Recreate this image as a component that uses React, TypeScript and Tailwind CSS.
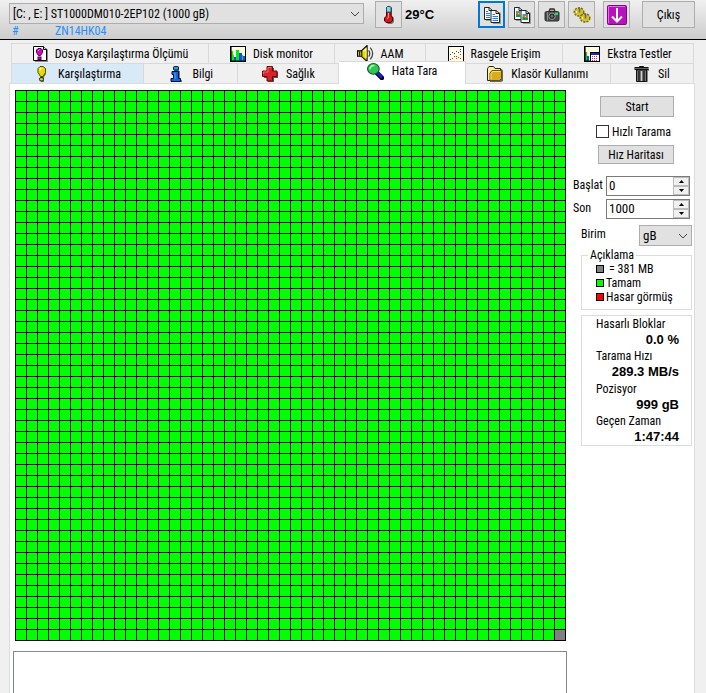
import React, { useState } from "react";

type IconProps = { className?: string };

function Svg({ children, className = "size-4" }: IconProps & { children: React.ReactNode }) {
  return (
    <svg viewBox="0 0 16 16" className={`${className} shrink-0`} aria-hidden="true">
      {children}
    </svg>
  );
}

const FileBenchIcon = () => (
  <Svg>
    <path d="M3 2H14L16 4V16H3Z" fill="#888" />
    <path d="M1.500 .5H11.500L14.500 3.500V14.500H1.500Z" fill="#fff" stroke="#000" />
    <path d="M11.500 .5V3.500H14.500" fill="#ddd" stroke="#000" />
    <path d="M6 2.500H9L10.500 4V6.500L8.500 9.500H6.500L4.500 6.500V4Z" fill="#d0c" stroke="#404" />
    <path d="M6 5L7.500 3.500" stroke="#fbf" />
    <rect x="6" y="11" width="3" height="2.500" fill="#d0c" stroke="#404" />
  </Svg>
);
const MonitorIcon = () => (
  <Svg>
    <rect x=".5" y=".5" width="15" height="15" fill="#ffffe0" stroke="#000" />
    <path d="M1 15V9H4V15ZM6 15V4H9V15ZM12 15V9H13V15Z" fill="#0e0" />
    <path d="M4 15V11H6V15ZM9 15V7H12V15ZM13 15V10H15V15Z" fill="#24f" />
    <path d="M1 5H3V9H1Z" fill="#0e0" />
    <path d="M.8 0V15.200H16" fill="none" stroke="#000" strokeWidth="1.600" />
  </Svg>
);
const SpeakerIcon = () => (
  <Svg className="size-[17px]">
    <path d="M.5 5.500H4L9.500 .5V15.500L4 10.500H.5Z" fill="#e8d800" stroke="#000" />
    <path d="M4.500 5.500V10.500M2.500 6V10" stroke="#000" />
    <path d="M6 6L8.500 3.500V12" fill="none" stroke="#fffba0" />
    <path d="M11 5Q13 8 11 11M12.500 2.500Q17 8 12.500 13.500" fill="none" stroke="#444" strokeWidth="1.200" />
  </Svg>
);
const ScatterIcon = () => (
  <Svg>
    <rect x=".5" y=".5" width="15" height="15" fill="#ffffe0" stroke="#000" />
    <path d="M2 8h1v1h-1zM4 6h1v1h-1zM6 7h1v1h-1zM8 5h1v1h-1zM10 6h1v1h-1zM12 3h1v1h-1zM12 5h1v1h-1z" fill="#23e" />
    <path d="M2 13h1v1h-1zM4 12h1v1h-1zM6 10h1v1h-1zM8 12h1v1h-1zM8 10h1v1h-1zM10 11h1v1h-1zM12 8h1v1h-1zM12 12h1v1h-1z" fill="#e22" />
  </Svg>
);
const ExtraIcon = () => (
  <Svg>
    <rect x=".5" y=".5" width="15" height="15" fill="#ffffe0" stroke="#000" />
    <path d="M1 15V6H3V15Z" fill="#0d0" />
    <path d="M3 15V10H5V15Z" fill="#24f" />
    <rect x="6.500" y="6.500" width="9" height="9" fill="#fff" stroke="#000" />
    <rect x="7" y="7" width="8" height="2" fill="#22c" />
    <path d="M8 10h1v1h-1zM10 10h1v1h-1zM12 10h1v1h-1zM8 12h1v1h-1zM10 12h1v1h-1zM12 12h1v1h-1zM8 14h1v1h-1zM10 14h1v1h-1zM12 14h1v1h-1z" fill="#d24" />
    <path d="M.8 0V15.200H7" fill="none" stroke="#000" strokeWidth="1.600" />
  </Svg>
);
const BulbIcon = () => (
  <Svg>
    <path d="M8 2H12V8L10 11V16H7Z" fill="#777" />
    <path d="M6 .5H9L11.500 2.500V6.500L9 10.500H6.500L4 6.500V2.500Z" fill="#e6da00" stroke="#554c00" />
    <path d="M6 5V2.500H8" fill="none" stroke="#fffbb0" />
    <rect x="5.500" y="11.500" width="4" height="3.500" rx="1.500" fill="#d8cc00" stroke="#222" />
  </Svg>
);
const InfoIcon = () => (
  <Svg>
    <path d="M6 1H11V5H12V14H14V16H5V14H6Z" fill="#777" />
    <rect x="5.500" y=".5" width="5" height="3.500" rx="1" fill="#1ad" stroke="#013" />
    <path d="M4 5.500H10.500V12.500H12.500V15.500H3V12.500H5.500V8.500H4Z" fill="#1563e0" stroke="#013" />
    <path d="M7 6.500V13" stroke="#3ab0ff" />
  </Svg>
);
const HealthIcon = () => (
  <Svg>
    <path d="M6 2H12V6H16V12H12V16H6V12H2V6H6Z" fill="#555" />
    <path d="M5 .5H10.500V5H15V10.500H10.500V15H5V10.500H.5V5H5Z" fill="#d62427" stroke="#6b0b0d" />
    <path d="M6 6V1.500H9.500M1.500 8V6H6" fill="none" stroke="#f66" />
  </Svg>
);
const SearchIcon = () => (
  <Svg className="size-[17px]">
    <path d="M9.500 9.500L14 14" stroke="#002" strokeWidth="4.500" strokeLinecap="round" />
    <path d="M9.500 9L13.500 13" stroke="#12d" strokeWidth="2.500" strokeLinecap="round" />
    <ellipse cx="6" cy="5.500" rx="5.500" ry="5" fill="#2fc84e" stroke="#0b5a22" />
    <path d="M2.800 6A3.500 3 0 0 1 7 2.500" fill="none" stroke="#b4ffc6" strokeWidth="1.300" />
  </Svg>
);
const FolderIcon = () => (
  <Svg>
    <path d="M3 3H15L16 5V15L14 16H3Z" fill="#666" />
    <path d="M.5 14.500V2.500L2 .5H6.500L8 2.500H13.500V13L12 14.500Z" fill="#fff09a" stroke="#222" />
    <path d="M3 14.500V7L5 4.500H14.500V12.500L12.500 14.500Z" fill="#d6ac20" stroke="#6b5200" />
    <path d="M4 13.500V7.500L5.500 5.500H13.500" fill="none" stroke="#ffe66a" />
  </Svg>
);
const TrashIcon = () => (
  <Svg>
    <path d="M4 3H15V5H14V16H5Z" fill="#888" />
    <path d="M5.500 1.500V.5H9.500V1.500" fill="none" stroke="#111" />
    <rect x="1" y="1.500" width="13" height="2" fill="#666" stroke="#111" />
    <path d="M2.500 4H12.500V15.500H2.500Z" fill="#777" stroke="#111" />
    <path d="M5 5V15M10 5V15" stroke="#222" strokeWidth="1.500" />
    <path d="M7.500 5V15" stroke="#ccc" />
  </Svg>
);

function ThermometerIcon() {
  return (
    <svg viewBox="0 0 12 18" className="h-[18px] w-3" aria-hidden="true">
      <path d="M5 2V10L3 13V16L5 18H9L11 16V12L9 10V2Z" fill="#777" />
      <path d="M3.500 1.500L4.500 .5H7L8 1.500V9.500L9.500 11.500V15L7.500 16.500H3.500L1.500 15V12L3.500 10Z" fill="#d8151b" stroke="#400" />
      <path d="M3.500 1.500L4.500 .5H7L8 1.500V6H3.500Z" fill="#6de0e8" stroke="#245" strokeWidth=".8" />
      <path d="M5.500 7V11L4 13" fill="none" stroke="#ff9a9a" />
    </svg>
  );
}
function CopyTextIcon({ picture }: { picture?: boolean }) {
  return (
    <svg viewBox="0 0 18 18" className="size-[18px]" aria-hidden="true">
      <path d="M3 3H9V15H3ZM10 6H17L18 8V18H10Z" fill="#999" />
      <path d="M1.500 1.500H6L9.500 4.500V13.500H1.500Z" fill="#fff" stroke="#222" />
      <path d="M8 4.500H13L16.500 7.500V16.500H8Z" fill="#fff" stroke="#222" />
      <path d="M13 4.500V7.500H16.500M6 1.500V4.500H8" fill="none" stroke="#222" />
      {picture ? (
        <>
          <path d="M3 5H7.500V11H3ZM9.500 8H15V14H9.500Z" fill="#2a9fd8" />
          <path d="M3 8H5V11H3ZM5 9H7.500V11H5ZM9.500 11H12V14H9.500ZM12 12H15V14H12Z" fill="#1a9a34" />
          <path d="M4 6H7V9H4ZM11 9H14V12H11Z" fill="#e3671c" />
          <path d="M5 7H6V8H5ZM12 10H13V11H12Z" fill="#ffe23a" />
        </>
      ) : (
        <path d="M3 5.500H5M3 7.500H7M3 9.500H7M3 11.500H7M9.500 8.500H12M9.500 10.500H15M9.500 12.500H15M9.500 14.500H15" stroke="#1683f0" />
      )}
    </svg>
  );
}
function CameraIcon() {
  return (
    <svg viewBox="0 0 18 16" className="h-4 w-[18px]" aria-hidden="true">
      <path d="M6 4.500L7 2H11L12 4.500" fill="#aaa" stroke="#333" strokeWidth="1.300" />
      <rect x="2" y="4.500" width="14" height="9.500" rx="1.500" fill="#4a4d4d" stroke="#2c2c2c" />
      <path d="M4.500 5V13.500" stroke="#888" />
      <circle cx="9" cy="9.300" r="3.200" fill="#2a2a2a" stroke="#999" />
      <circle cx="9" cy="9.300" r="1.200" fill="#777" />
      <rect x="12" y="5.500" width="3" height="2.500" fill="#1ee05a" />
    </svg>
  );
}
function GearsIcon() {
  return (
    <svg viewBox="0 0 18 18" className="size-[18px]" aria-hidden="true">
      <g stroke="#7a6c08" fill="#d5c02a">
        <ellipse cx="6" cy="6" rx="4.500" ry="3.800" strokeWidth="2" strokeDasharray="2 1" />
        <ellipse cx="6" cy="6" rx="4" ry="3.300" stroke="none" />
        <ellipse cx="12" cy="12" rx="4.500" ry="3.800" strokeWidth="2" strokeDasharray="2 1" />
        <ellipse cx="12" cy="12" rx="4" ry="3.300" stroke="none" />
      </g>
      <path d="M6.500 1.500V6.500M12.500 7.500V12.500" stroke="#666" strokeWidth="1.500" />
      <path d="M3.500 5V7M9.500 11V13" stroke="#fff2a0" />
    </svg>
  );
}
function DownIcon() {
  return (
    <svg viewBox="0 0 20 20" className="size-5 shrink-0" aria-hidden="true">
      <rect x=".5" y=".5" width="19" height="19" rx="1" fill="#b812bd" stroke="#7b087f" />
      <path d="M1.500 18V1.500H18" fill="none" stroke="#e66be8" />
      <path d="M10 3V16M5 11.500L10 16.500L15 11.500" fill="none" stroke="#fff" strokeWidth="2" />
    </svg>
  );
}
function Chevron() {
  return (
    <svg viewBox="0 0 10 6" className="pointer-events-none absolute right-1 top-1/2 h-1.5 w-2.5 -translate-y-1/2" aria-hidden="true">
      <path d="M1 1L5 5L9 1" fill="none" stroke="#444" />
    </svg>
  );
}

const upperTabs = [
  { label: "Dosya Karşılaştırma Ölçümü", Icon: FileBenchIcon },
  { label: "Disk monitor", Icon: MonitorIcon },
  { label: "AAM", Icon: SpeakerIcon },
  { label: "Rasgele Erişim", Icon: ScatterIcon },
  { label: "Ekstra Testler", Icon: ExtraIcon },
];
const lowerTabs = [
  { label: "Karşılaştırma", Icon: BulbIcon },
  { label: "Bilgi", Icon: InfoIcon },
  { label: "Sağlık", Icon: HealthIcon },
  { label: "Hata Tara", Icon: SearchIcon },
  { label: "Klasör Kullanımı", Icon: FolderIcon },
  { label: "Sil", Icon: TrashIcon },
];

const toolButton = "flex h-[27px] w-[27px] shrink-0 items-center justify-center border bg-[#e1e1e1]";
const pushButton = "border border-[#adadad] bg-[#e1e1e1] text-center";

function Spinner({ id, label, initial }: { id: string; label: string; initial: number }) {
  const [value, setValue] = useState(String(initial));
  const step = (d: number) => setValue(String(Math.max(0, Number(value) + d)));
  return (
    <div className="flex items-center justify-between">
      <label htmlFor={id} className="pb-0.5">{label}</label>
      <div className="flex h-5 w-[84px] border border-[#7a7a7a] bg-white">
        <input id={id} inputMode="numeric" value={value} onChange={(e) => setValue(e.target.value)} className="min-w-0 flex-1 px-0.5 text-[13px] outline-none" />
        <div className="flex w-4 flex-col">
          <button type="button" aria-label={`${label} +`} onClick={() => step(1)} className="flex flex-1 items-center justify-center border border-[#bdbdbd] bg-[#f0f0f0]">
            <svg viewBox="0 0 5 3" className="h-[3px] w-[5px]"><path d="M0 3L2.500 0L5 3Z" /></svg>
          </button>
          <button type="button" aria-label={`${label} -`} onClick={() => step(-1)} className="flex flex-1 items-center justify-center border border-[#bdbdbd] bg-[#f0f0f0]">
            <svg viewBox="0 0 5 3" className="h-[3px] w-[5px]"><path d="M0 0L2.500 3L5 0Z" /></svg>
          </button>
        </div>
      </div>
    </div>
  );
}

function Stat({ label, value }: { label: string; value: string }) {
  return (
    <div>
      <dt className="leading-4">{label}</dt>
      <dd className="text-right font-['Liberation_Sans',Arial,sans-serif] text-[13px] font-bold leading-4">{value}</dd>
    </div>
  );
}

export default function App() {
  const [active, setActive] = useState("Hata Tara");
  return (
    <div className="flex min-h-screen flex-col bg-[#f0f0f0] font-['Roboto_Condensed','Liberation_Sans',sans-serif] text-xs text-black">
      <header className="flex h-10 items-start border-b border-black bg-linear-to-b from-[#f0f0f0] to-[#cdcdcd] pl-[9px] pr-[11px] pt-px">
        <div className="min-w-0 flex-1 pt-0.5">
          <div className="relative">
            <select aria-label="Disk" className="block h-[21px] w-full appearance-none border border-[#adadad] bg-[#e1e1e1] pl-[3px]">
              <option>[C: , E: ] ST1000DM010-2EP102 (1000 gB)</option>
            </select>
            <Chevron />
          </div>
          <div className="flex pl-[3px] leading-[14px] text-[#1e90ff]">
            <span className="w-[43px]">#</span>
            <span>ZN14HK04</span>
          </div>
        </div>
        <button type="button" aria-label="Sıcaklık" className={`${toolButton} ml-[11px] border-[#adadad]`}><ThermometerIcon /></button>
        <output className="w-[76px] pl-[3px] font-['Liberation_Sans',Arial,sans-serif] text-[13px] font-bold leading-[27px]">29°C</output>
        <div className="flex gap-[3px]">
          <button type="button" aria-label="Metni kopyala" className={`${toolButton} border-2 border-[#0078d7]`}><CopyTextIcon /></button>
          <button type="button" aria-label="Resmi kopyala" className={`${toolButton} border-[#adadad]`}><CopyTextIcon picture /></button>
          <button type="button" aria-label="Ekran görüntüsü" className={`${toolButton} border-[#adadad]`}><CameraIcon /></button>
          <button type="button" aria-label="Seçenekler" className={`${toolButton} border-[#adadad]`}><GearsIcon /></button>
        </div>
        <button type="button" aria-label="Küçült" className={`${toolButton} ml-2 border-[#adadad]`}><DownIcon /></button>
        <button type="button" className={`${pushButton} ml-3 h-[27px] w-[53px]`}>Çıkış</button>
      </header>

      <div role="tablist" className="mx-[11px] mt-[3px] pr-px">
        <div className="grid h-5 grid-cols-[197fr_126fr_91fr_137fr_131fr] border-l border-t border-[#d9d9d9]">
          {upperTabs.map(({ label, Icon }) => (
            <button key={label} type="button" role="tab" aria-selected={active === label} onClick={() => setActive(label)} className="flex items-center justify-center gap-[7px] whitespace-nowrap border-r border-[#d9d9d9]">
              <Icon />{label}
            </button>
          ))}
        </div>
        <div className="grid grid-cols-[133fr_94fr_101fr_126fr_145fr_83fr] grid-rows-[20px] items-end">
          {lowerTabs.map(({ label, Icon }) => (
            <button
              key={label}
              type="button"
              role="tab"
              aria-selected={active === label}
              onClick={() => setActive(label)}
              className={`flex items-center justify-center gap-2 whitespace-nowrap border-r border-t border-[#d9d9d9] first:border-l ${active === label ? "relative z-10 -mb-px -mt-0.5 h-[23px] bg-white pb-1" : label === "Karşılaştırma" ? "h-5 bg-[#d8e9f8]" : "h-5"}`}
            >
              <Icon />{label}
            </button>
          ))}
        </div>
      </div>

      <main className="ml-[9px] mr-[11px] flex flex-1 border border-b-0 border-[#dcdcdc] bg-white">
        <div className="flex shrink-0 flex-col pl-[3px]">
          <div role="img" aria-label="Blok haritası" className="ml-0.5 mt-1.5 grid w-fit grid-cols-[repeat(50,10px)] gap-px bg-black p-px">
            {Array.from({ length: 2500 }, (_, i) => (
              <div key={i} className={`h-2.5 ${i === 2499 ? "bg-[#808080]" : "bg-[#00ff00]"}`} />
            ))}
          </div>
          <div role="log" className="mt-2.5 min-h-10 w-[554px] flex-1 border border-b-0 border-[#828790]">
          </div>
        </div>

        <aside className="min-w-0 flex-1 pl-1 pr-0.5 pt-3">
          <div className="ml-auto w-[119px]">
            <div className="flex flex-col pr-[18px]">
              <button type="button" className={`${pushButton} ml-auto h-[21px] w-[74px]`}>Start</button>
              <label className="mt-[7px] flex h-[15px] items-center gap-[3px] pl-[23px]">
                <input type="checkbox" className="size-[13px] shrink-0 appearance-none border border-[#333] bg-white checked:bg-[#0078d7]" />
                <span className="whitespace-nowrap">Hızlı Tarama</span>
              </label>
              <button type="button" className={`${pushButton} ml-auto mt-1.5 h-[19px] w-[76px] leading-4`}>Hız Haritası</button>
            </div>
            <div className="mt-3 flex flex-col gap-[3px] pr-0.5">
              <Spinner id="start" label="Başlat" initial={0} />
              <Spinner id="end" label="Son" initial={1000} />
            </div>
            <div className="mt-1.5 flex items-center justify-between pl-2">
              <label htmlFor="unit" className="pb-1">Birim</label>
              <div className="relative w-[53px]">
                <select id="unit" className="block h-[21px] w-full appearance-none border border-[#adadad] bg-[#e1e1e1] pl-[3px] text-[13px]">
                  <option>gB</option>
                </select>
                <Chevron />
              </div>
            </div>
            <fieldset className="ml-2 mt-0.5 h-[62px] border border-[#dcdcdc] pl-3.5">
              <legend className="-ml-2 px-0.5 leading-[14px]">Açıklama</legend>
              <ul className="leading-[14px]">
                <li className="flex items-center gap-[5px]"><span className="size-2 border border-black bg-[#808080]" />= 381 MB</li>
                <li className="flex items-center gap-0.5"><span className="size-2 border border-black bg-[#00ff00]" />Tamam</li>
                <li className="flex items-center gap-0.5 whitespace-nowrap"><span className="size-2 border border-black bg-[#ff0000]" />Hasar görmüş</li>
              </ul>
            </fieldset>
            <dl className="ml-2 mt-[5px] flex h-[131px] flex-col justify-between border border-[#dcdcdc] pl-3.5 pr-3">
              <Stat label="Hasarlı Bloklar" value="0.0 %" />
              <Stat label="Tarama Hızı" value="289.3 MB/s" />
              <Stat label="Pozisyor" value="999 gB" />
              <Stat label="Geçen Zaman" value="1:47:44" />
            </dl>
          </div>
        </aside>
      </main>
    </div>
  );
}
